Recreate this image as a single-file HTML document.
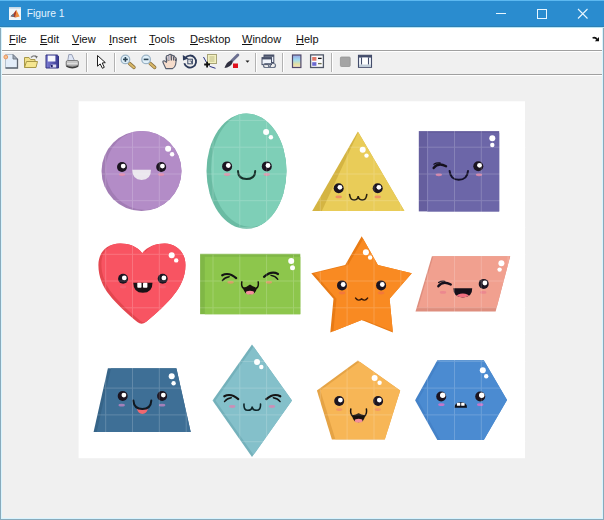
<!DOCTYPE html>
<html><head><meta charset="utf-8">
<style>
html,body{margin:0;padding:0;}
body{width:604px;height:520px;position:relative;overflow:hidden;background:#f0f0f0;font-family:"Liberation Sans",sans-serif;}
.a{position:absolute;}
#title{left:0;top:0;width:604px;height:28px;background:#2a8ccf;}
#menu{left:0;top:28px;width:604px;height:22px;background:#fff;}
.mi{position:absolute;top:32px;font-size:11px;color:#111;white-space:nowrap;line-height:14px;}
.mi u{text-decoration:underline;text-underline-offset:1px;text-decoration-thickness:1px;}
#l1{left:0;top:50px;width:604px;height:1px;background:#a0a0a0;}
#l1b{left:0;top:51px;width:604px;height:1px;background:#fff;}
#tb{left:0;top:52px;width:604px;height:22px;background:#f0f0f0;}
#l2{left:0;top:74px;width:604px;height:1px;background:#a0a0a0;}
#l2b{left:0;top:75px;width:604px;height:1px;background:#fff;}
#bl{left:0;top:28px;width:1px;height:492px;background:#88aabb;}#bl2{left:1px;top:28px;width:1px;height:491px;background:#d8f4ff;}
#br{left:603px;top:28px;width:1px;height:492px;background:#88aabb;}#br2{left:602px;top:28px;width:1px;height:491px;background:#d8f4ff;}
#bb{left:0;top:519px;width:604px;height:1px;background:#88aabb;}#bb2{left:1px;top:518px;width:602px;height:1px;background:#d8f4ff;}
.sep{position:absolute;top:53px;width:1px;height:19px;background:#b2b2b2;box-shadow:1px 0 0 #fff;}
</style></head>
<body>
<div class="a" id="title"></div><div class="a" style="left:0;top:0;width:604px;height:1px;background:#5cb8f0"></div><div class="a" style="left:0;top:26px;width:604px;height:1px;background:#2d80b4"></div><div class="a" style="left:0;top:27px;width:604px;height:1px;background:#b8e4f4"></div><div class="a" style="left:0;top:28px;width:604px;height:2px;background:#f4fcff"></div>
<div class="a" id="menu"></div>
<div class="a" id="l1"></div><div class="a" id="l1b"></div>
<div class="a" id="tb"></div>
<div class="a" id="l2"></div><div class="a" id="l2b"></div>
<div class="a" style="left:26.8px;top:7px;font-size:10.3px;color:#e4f4ff;line-height:14px;">Figure 1</div>
<div class="mi" style="left:9px"><u>F</u>ile</div>
<div class="mi" style="left:40px"><u>E</u>dit</div>
<div class="mi" style="left:72px"><u>V</u>iew</div>
<div class="mi" style="left:109px"><u>I</u>nsert</div>
<div class="mi" style="left:149px"><u>T</u>ools</div>
<div class="mi" style="left:190px"><u>D</u>esktop</div>
<div class="mi" style="left:242px"><u>W</u>indow</div>
<div class="mi" style="left:296px"><u>H</u>elp</div>
<div class="sep" style="left:86px"></div>
<div class="sep" style="left:114px"></div>
<div class="sep" style="left:255px"></div>
<div class="sep" style="left:282px"></div>
<div class="sep" style="left:331px"></div>
<svg class="a" style="left:0;top:0" width="604" height="80" viewBox="0 0 604 80"><rect x="9" y="7" width="12" height="13" fill="#eef6fb"/><rect x="9" y="7" width="12" height="1.6" fill="#c4d8e6"/><path d="M10.5,16.2 L13.6,13.6 L16.3,9.8 L15.6,17.5 Z" fill="#a83c26"/><path d="M16.3,9.8 L19.6,16.6 L15.6,17.5 Z" fill="#f08c3c"/><path d="M10.5,16.2 L13.6,13.6 L14.2,16.8 Z" fill="#5a7890"/><path d="M5.5,54.5 H13 L17.5,59 V68 H5.5 Z" fill="#e3edf9" stroke="#b4c0cc" stroke-width="1"/><path d="M17.5,59 V68 H5.5" fill="none" stroke="#5e6672" stroke-width="1.3"/><path d="M13,54.5 V59 H17.5 Z" fill="#a4aebb" stroke="#6a727e" stroke-width="0.9"/><circle cx="5.8" cy="57" r="1.9" fill="#f6c090" stroke="#e89058" stroke-width="0.9"/><path d="M24.5,67.5 V57.5 H29 L30.5,59.5 H35 V61.5" fill="#f0e08a" stroke="#a89848" stroke-width="1"/><path d="M24.5,67.5 L26.5,61.5 H37.5 L36,67.5 Z" fill="#f5e690" stroke="#a89848" stroke-width="1"/><path d="M31,57.5 Q33.5,54.5 36.5,57" fill="none" stroke="#808080" stroke-width="1.2"/><path d="M35,55.5 L37.8,56.2 L36.4,58.8 Z" fill="#707070"/><defs><linearGradient id="fpg" x1="0" y1="0" x2="1" y2="0"><stop offset="0" stop-color="#7c7cd4"/><stop offset="1" stop-color="#3a3a92"/></linearGradient><linearGradient id="prg" x1="0" y1="0" x2="0" y2="1"><stop offset="0" stop-color="#d8d8d8"/><stop offset="1" stop-color="#9a9a9a"/></linearGradient></defs><path d="M46,55 H57.3 L58.5,56.2 V68 H46 Z" fill="url(#fpg)" stroke="#323280" stroke-width="1"/><rect x="47.8" y="55.6" width="7.6" height="5.9" fill="#f6f7fc"/><path d="M50,67.6 L51.2,64.4 H56.2 V67.6 Z" fill="#dcdcf2"/><rect x="50.9" y="64.8" width="1.8" height="2.4" fill="#1e1e66"/><path d="M67.8,60.5 L68.8,54.6 H71.8 L74.4,60.5 Z" fill="#dee6f6" stroke="#8e96ae" stroke-width="0.9"/><path d="M66.2,62 Q66.2,60.6 67.6,60.6 H77 Q78.4,60.6 78.4,62 V65.6 Q72.3,68.6 66.2,65.6 Z" fill="url(#prg)" stroke="#6c6c6c" stroke-width="0.9"/><path d="M67,63.8 H77.6" stroke="#f4f4f4" stroke-width="0.9"/><path d="M66.4,66.2 Q72.3,69.4 78.2,66.2" stroke="#3c3c3c" stroke-width="1.4" fill="none"/><path d="M97.5,55.5 L97.5,66.2 L100.2,63.9 L102.4,68.3 L104.3,67.3 L102.2,63 L105.3,62.6 Z" fill="#fff" stroke="#1e1e1e" stroke-width="1" stroke-linejoin="miter"/><path d="M129.4,63.4 L134.0,67.4" stroke="#8a7040" stroke-width="3.4" stroke-linecap="round"/><path d="M129.4,63.4 L134.0,67.4" stroke="#d8b868" stroke-width="2" stroke-linecap="round"/><circle cx="125.4" cy="59.4" r="4.3" fill="#e0f0fa" stroke="#9cb4c6" stroke-width="1.3"/><path d="M123.0,59.4 H127.80000000000001" stroke="#2e4656" stroke-width="1.6"/><path d="M125.4,57.0 V61.8" stroke="#2e4656" stroke-width="1.6"/><path d="M150.1,63.4 L154.7,67.4" stroke="#8a7040" stroke-width="3.4" stroke-linecap="round"/><path d="M150.1,63.4 L154.7,67.4" stroke="#d8b868" stroke-width="2" stroke-linecap="round"/><circle cx="146.1" cy="59.4" r="4.3" fill="#e0f0fa" stroke="#9cb4c6" stroke-width="1.3"/><path d="M143.7,59.4 H148.5" stroke="#2e4656" stroke-width="1.6"/><path d="M165.8,68.6 L163,62.6 Q162.4,60.6 164.4,60.9 L166.4,62.4 L166.2,57.2 Q166.3,55.2 168.2,55.6 Q169.2,53.9 171,54.5 Q172.2,54.6 172.6,55.6 Q174.4,55.3 174.9,57 Q176.6,57.5 176.3,59.8 L175.6,64.6 Q174.8,67.6 172.6,68.6 Z" fill="#f5dccb" stroke="#545c6c" stroke-width="1.1" stroke-linejoin="round"/><path d="M166.4,57.5 Q167,60 166.6,61.5 M168.6,56 L168.9,60.6 M171.2,55 L171.4,60.4 M173.7,56.2 L173.7,60.6 M176,58.5 L175.6,61" stroke="#4e5666" stroke-width="1.3" fill="none"/><path d="M167,56.2 L168,60 L170,60 L170,55.5 Z M172,56 L172.8,60 L173,56.5 Z" fill="#c8c6d4" opacity="0.8"/><path d="M185.2,58 A6,6 0 1 1 184.3,63.2" fill="none" stroke="#2c3a5a" stroke-width="1.8"/><path d="M182.8,55 L188.5,58.6 L183,60.6 Z" fill="#2c3a5a"/><rect x="187.8" y="59.2" width="4.6" height="4.6" fill="none" stroke="#3c4a66" stroke-width="1"/><path d="M189.5,61 L191.5,61 L191.5,63" stroke="#3c4a66" stroke-width="0.8" fill="none"/><rect x="207.5" y="54.5" width="9" height="9" fill="#f2f0c0" stroke="#a8a478" stroke-width="1"/><path d="M209.5,57 H214.5 M209.5,59 H214.5 M209.5,61 H214.5" stroke="#b0ac78" stroke-width="0.8"/><path d="M203.5,57 L206.5,62.5 M209.5,66.3 L215.5,68.3" stroke="#283080" stroke-width="1"/><path d="M204.2,64.5 H210 M207.1,61.8 V67.5" stroke="#101010" stroke-width="1.8"/><path d="M237.8,55 L231.5,61.3" stroke="#6c7090" stroke-width="3" stroke-linecap="round"/><path d="M232.5,60.5 Q229.5,60 227,63 Q225,66 224.5,68 Q227,67.8 230,66 Q233,63.5 232.5,60.5 Z" fill="#303040"/><rect x="233" y="63.5" width="5" height="4.5" fill="#e0101c"/><path d="M245.5,60.5 H249.5 L247.5,62.8 Z" fill="#202020"/><rect x="264" y="55" width="9.8" height="7.5" fill="#e8eef8" stroke="#485068" stroke-width="1"/><rect x="264" y="55" width="9.8" height="1.8" fill="#485068"/><rect x="262" y="57.6" width="9.5" height="7" fill="#f0f4fb" stroke="#485068" stroke-width="1"/><rect x="262" y="57.6" width="9.5" height="1.8" fill="#485068"/><rect x="263.5" y="63.5" width="7" height="4" rx="2" fill="none" stroke="#6a7488" stroke-width="1.2"/><rect x="268.5" y="63.5" width="7" height="4" rx="2" fill="none" stroke="#6a7488" stroke-width="1.2"/><defs><linearGradient id="cbg" x1="0" y1="0" x2="0" y2="1"><stop offset="0" stop-color="#98a4e4"/><stop offset="0.4" stop-color="#a0dcf0"/><stop offset="0.75" stop-color="#e6e0a0"/><stop offset="1" stop-color="#f2e2cc"/></linearGradient></defs><rect x="292.5" y="55" width="8.4" height="12.5" fill="url(#cbg)" stroke="#50486a" stroke-width="1.2"/><rect x="310.6" y="54.9" width="12.8" height="12.6" fill="#fbfbfd" stroke="#505868" stroke-width="1.3"/><rect x="312.2" y="57" width="4.2" height="3.7" fill="#e07868"/><rect x="312.2" y="62.2" width="4.2" height="3.6" fill="#6a68d0"/><path d="M318,58.4 H321.6" stroke="#101010" stroke-width="1.3"/><path d="M318,63.6 H321.6" stroke="#70704c" stroke-width="1.3"/><rect x="340.4" y="57" width="9.8" height="9.5" rx="1" fill="#a4a4a4" stroke="#949494" stroke-width="0.8"/><rect x="358.5" y="55.3" width="13" height="12" fill="#eef2f8" stroke="#434c6a" stroke-width="1.1"/><rect x="358.5" y="55.3" width="13" height="2.3" fill="#434c6a"/><rect x="361" y="57.6" width="1.2" height="7" fill="#434c6a"/><rect x="367.8" y="57.6" width="1.2" height="7" fill="#434c6a"/><rect x="362.2" y="57.6" width="5.6" height="7" fill="#fff"/><rect x="359" y="64.6" width="12" height="2.2" fill="#c0ccd8"/><path d="M592.6,37.9 Q595.5,36.8 597.2,39.6" fill="none" stroke="#101010" stroke-width="1.6"/><path d="M594.8,41.3 L599,41.3 L599,37 Z" fill="#101010"/><path d="M496,13.5 H506" stroke="#e8f6ff" stroke-width="1"/><rect x="537.5" y="9.5" width="9" height="9" fill="none" stroke="#e8f6ff" stroke-width="1"/><path d="M578,9 L587.5,18.5 M587.5,9 L578,18.5" stroke="#e8f6ff" stroke-width="1.1"/></svg>
<svg class="a" style="left:0;top:0" width="604" height="520" viewBox="0 0 604 520"><rect x="78.6" y="101.3" width="446.4" height="356.9" fill="#fff"/><clipPath id="c1"><circle cx="141.5" cy="171" r="40" fill="#000"/></clipPath><circle cx="141.5" cy="171" r="40" fill="#a27db5"/><g clip-path="url(#c1)"><circle cx="145.5" cy="170" r="40" fill="#b38cc7"/></g><circle cx="122" cy="167" r="5" fill="#1b1420"/><circle cx="123.2" cy="166.1" r="2.4" fill="#fff"/><circle cx="161.2" cy="167" r="5" fill="#1b1420"/><circle cx="162.4" cy="166.1" r="2.4" fill="#fff"/><ellipse cx="122" cy="174.6" rx="3.2" ry="1.4" fill="#e88aa8" opacity="0.8"/><ellipse cx="161.2" cy="174.6" rx="3.2" ry="1.4" fill="#e88aa8" opacity="0.8"/><path d="M132.3,169.8 H151 Q151,180 141.6,180 Q132.3,180 132.3,169.8 Z" fill="#ebe7ee"/><circle cx="168.1" cy="148.8" r="3" fill="#fff"/><circle cx="172.1" cy="154.2" r="2.2" fill="#fff"/><clipPath id="c2"><ellipse cx="246.5" cy="171.1" rx="40" ry="57.7" fill="#000"/></clipPath><ellipse cx="246.5" cy="171.1" rx="40" ry="57.7" fill="#6abba3"/><g clip-path="url(#c2)"><ellipse cx="251" cy="169.2" rx="40" ry="57.7" fill="#7ecfb7"/></g><circle cx="227.1" cy="166.4" r="5" fill="#1b1420"/><circle cx="228.3" cy="165.5" r="2.4" fill="#fff"/><circle cx="266.8" cy="166.4" r="5" fill="#1b1420"/><circle cx="268.0" cy="165.5" r="2.4" fill="#fff"/><ellipse cx="227.1" cy="174.5" rx="3.2" ry="1.4" fill="#e88aa8" opacity="0.8"/><ellipse cx="266.8" cy="174.5" rx="3.2" ry="1.4" fill="#e88aa8" opacity="0.8"/><path d="M238,171 Q238,179 246.6,179 Q255.2,179 255.2,171" fill="none" stroke="#17302a" stroke-width="2" stroke-linecap="round"/><circle cx="266.1" cy="132.1" r="3" fill="#fff"/><circle cx="270.9" cy="137.2" r="2.2" fill="#fff"/><clipPath id="c3"><path d="M357.9,131.6 L404.4,211 L312.2,211 Z" fill="#000"/></clipPath><path d="M357.9,131.6 L404.4,211 L312.2,211 Z" fill="#d4b442"/><g clip-path="url(#c3)"><path d="M358.6,131.6 L410,215 L320,215 Z" fill="#e9cc58"/></g><circle cx="338.7" cy="188.2" r="5" fill="#1b1420"/><circle cx="339.9" cy="187.3" r="2.4" fill="#fff"/><circle cx="377.7" cy="188.2" r="5" fill="#1b1420"/><circle cx="378.9" cy="187.3" r="2.4" fill="#fff"/><ellipse cx="338.7" cy="196.9" rx="3.2" ry="1.4" fill="#f07868" opacity="0.7"/><ellipse cx="377.7" cy="196.9" rx="3.2" ry="1.4" fill="#f07868" opacity="0.7"/><path d="M349.6,194.5 Q350.5,200.5 354.5,200 Q358,199.5 358.2,196 Q358.4,199.5 362,200 Q366,200.5 366.8,194.5" fill="none" stroke="#2a2010" stroke-width="1.6" stroke-linecap="round"/><circle cx="362.7" cy="149.8" r="3" fill="#fff"/><circle cx="366.5" cy="155.6" r="2.2" fill="#fff"/><clipPath id="c4"><rect x="418.8" y="131.1" width="80.4" height="80.3" fill="#000"/></clipPath><rect x="418.8" y="131.1" width="80.4" height="80.3" fill="#655e9e"/><g clip-path="url(#c4)"><rect x="427" y="133" width="80.4" height="80.3" fill="#6c66a8"/></g><path d="M433.6,168 Q438.1,162 446.1,166.2" fill="none" stroke="#14101c" stroke-width="2.3" stroke-linecap="round"/><path d="M433.90000000000003,164.2 Q436.6,162.4 440.1,163" fill="none" stroke="#14101c" stroke-width="1.3" stroke-linecap="round"/><circle cx="478.3" cy="166.2" r="5" fill="#1b1420"/><circle cx="479.5" cy="165.3" r="2.4" fill="#fff"/><ellipse cx="438.8" cy="174.8" rx="3.2" ry="1.4" fill="#e88aa8" opacity="0.8"/><ellipse cx="479" cy="174.8" rx="3.2" ry="1.4" fill="#e88aa8" opacity="0.8"/><path d="M449.6,171 Q450.5,179.8 458.8,179.8 Q467.2,179.8 468,171" fill="none" stroke="#15122a" stroke-width="2" stroke-linecap="round"/><circle cx="492.3" cy="138.3" r="3" fill="#fff"/><circle cx="492.3" cy="145" r="2.2" fill="#fff"/><clipPath id="c5"><path d="M 142.3,253.3 C 147.5,246.5 156.0,243.5 165.0,243.6 C 176.0,243.8 185.5,252.0 185.5,265.0 C 185.5,277.0 180.2,287.0 173.7,295.0 C 167.7,303.0 155.2,314.5 145.9,322.0 Q 141.6,325.3 137.3,322.0 C 128.0,314.5 115.5,303.0 109.5,295.0 C 103.0,287.0 98.4,277.0 98.4,265.0 C 98.4,253.0 106.0,243.8 120.0,243.6 C 129.0,243.5 137.0,246.5 142.3,253.3 Z" fill="#000"/></clipPath><path d="M 142.3,253.3 C 147.5,246.5 156.0,243.5 165.0,243.6 C 176.0,243.8 185.5,252.0 185.5,265.0 C 185.5,277.0 180.2,287.0 173.7,295.0 C 167.7,303.0 155.2,314.5 145.9,322.0 Q 141.6,325.3 137.3,322.0 C 128.0,314.5 115.5,303.0 109.5,295.0 C 103.0,287.0 98.4,277.0 98.4,265.0 C 98.4,253.0 106.0,243.8 120.0,243.6 C 129.0,243.5 137.0,246.5 142.3,253.3 Z" fill="#e4464f"/><g clip-path="url(#c5)"><path d="M 145.3,252.1 C 150.5,245.3 159.0,242.3 168.0,242.4 C 179.0,242.6 188.5,250.8 188.5,263.8 C 188.5,275.8 183.2,285.8 176.7,293.8 C 170.7,301.8 158.2,313.3 148.9,320.8 Q 144.6,324.1 140.3,320.8 C 131.0,313.3 118.5,301.8 112.5,293.8 C 106.0,285.8 101.4,275.8 101.4,263.8 C 101.4,251.8 109.0,242.6 123.0,242.4 C 132.0,242.3 140.0,245.3 145.3,252.1 Z" fill="#f85462"/></g><circle cx="123.1" cy="278.8" r="5" fill="#1b1420"/><circle cx="124.3" cy="277.9" r="2.4" fill="#fff"/><circle cx="162.7" cy="278.8" r="5" fill="#1b1420"/><circle cx="163.9" cy="277.9" r="2.4" fill="#fff"/><ellipse cx="123.1" cy="287" rx="3.2" ry="1.4" fill="#f07890" opacity="0.35"/><ellipse cx="162.7" cy="287" rx="3.2" ry="1.4" fill="#f07890" opacity="0.35"/><path d="M133.3,282.7 H152.5 Q152.5,292.7 142.9,292.7 Q133.3,292.7 133.3,282.7 Z" fill="#1a1216"/><rect x="137.3" y="282.7" width="4.2" height="5" rx="0.8" fill="#fff"/><rect x="143" y="282.7" width="4.4" height="5" rx="0.8" fill="#fff"/><circle cx="171.7" cy="255.2" r="3" fill="#fff"/><circle cx="176.2" cy="260.4" r="2.2" fill="#fff"/><clipPath id="c6"><rect x="200.1" y="253.8" width="100.2" height="60.4" fill="#000"/></clipPath><rect x="200.1" y="253.8" width="100.2" height="60.4" fill="#80b746"/><g clip-path="url(#c6)"><rect x="204.8" y="256.8" width="100.2" height="60.4" fill="#8dc64c"/></g><path d="M222.2,275.3 Q228.7,271.7 236.2,278.1" fill="none" stroke="#141414" stroke-width="2.2" stroke-linecap="round"/><path d="M222.39999999999998,280.6 Q224.79999999999998,277.3 229.2,276.7" fill="none" stroke="#141414" stroke-width="1.4" stroke-linecap="round"/><path d="M278,274 Q271.5,270.4 264,276.8" fill="none" stroke="#141414" stroke-width="2.2" stroke-linecap="round"/><path d="M277.8,279.3 Q275.4,276 271,275.4" fill="none" stroke="#141414" stroke-width="1.4" stroke-linecap="round"/><ellipse cx="230.6" cy="282.3" rx="3.2" ry="1.4" fill="#f09070" opacity="0.75"/><ellipse cx="268.9" cy="282.3" rx="3.2" ry="1.4" fill="#f09070" opacity="0.75"/><path d="M243.0,287.6 Q247.13,287.20000000000005 250,284.6 Q252.87,287.20000000000005 257.0,287.6 Q256.2,294.3 250,294.3 Q243.8,294.3 243.0,287.6 Z" fill="#17120e"/><path d="M241.8,281.8 Q241.0,286.1 243.60000000000002,288.40000000000003" fill="none" stroke="#17120e" stroke-width="1.5" stroke-linecap="round"/><path d="M258.2,281.8 Q259.0,286.1 256.4,288.40000000000003" fill="none" stroke="#17120e" stroke-width="1.5" stroke-linecap="round"/><ellipse cx="250" cy="292.7" rx="4.1" ry="1.9" fill="#f3909a"/><circle cx="291.2" cy="261" r="3" fill="#fff"/><circle cx="292.5" cy="267.8" r="2.5" fill="#fff"/><clipPath id="c7"><path d="M361.7,236.3 L377.9,264.9 L411.8,273.3 L389.6,298.7 L392.9,332.5 L361.7,319.9 L330.3,332.5 L333.5,298.7 L311.3,273.3 L345.2,264.9 Z" fill="#000"/></clipPath><path d="M361.7,236.3 L377.9,264.9 L411.8,273.3 L389.6,298.7 L392.9,332.5 L361.7,319.9 L330.3,332.5 L333.5,298.7 L311.3,273.3 L345.2,264.9 Z" fill="#e87a14"/><g clip-path="url(#c7)"><path d="M364.7,236.3 L380.9,264.9 L414.8,273.3 L392.6,298.7 L395.9,332.5 L364.7,319.9 L333.3,332.5 L336.5,298.7 L314.3,273.3 L348.2,264.9 Z" fill="#f98a22"/></g><circle cx="342" cy="285.4" r="5" fill="#1b1420"/><circle cx="343.2" cy="284.5" r="2.4" fill="#fff"/><circle cx="381.1" cy="285.4" r="5" fill="#1b1420"/><circle cx="382.3" cy="284.5" r="2.4" fill="#fff"/><ellipse cx="342" cy="293" rx="3.2" ry="1.4" fill="#f06a50" opacity="0.55"/><ellipse cx="381.1" cy="293" rx="3.2" ry="1.4" fill="#f06a50" opacity="0.55"/><path d="M355.5,298 Q358.5,301.8 361.6,298.8 Q364.7,301.8 367.7,298" fill="none" stroke="#3a1a08" stroke-width="1.3" stroke-linecap="round"/><circle cx="365.9" cy="252.2" r="3" fill="#fff"/><circle cx="370.1" cy="257.5" r="2.2" fill="#fff"/><clipPath id="c8"><path d="M431.9,256.3 L510.2,256.3 L495.6,311.5 L415.5,311.5 Z" fill="#000"/></clipPath><path d="M431.9,256.3 L510.2,256.3 L495.6,311.5 L415.5,311.5 Z" fill="#de8e7e"/><g clip-path="url(#c8)"><path d="M434.6,252 L513,252 L498.4,307.6 L418.3,307.6 Z" fill="#f1a08f"/></g><path d="M438.3,286.3 Q442.8,280.3 450.8,284.5" fill="none" stroke="#14101c" stroke-width="2.3" stroke-linecap="round"/><path d="M438.6,282.5 Q441.3,280.7 444.8,281.3" fill="none" stroke="#14101c" stroke-width="1.3" stroke-linecap="round"/><circle cx="483.7" cy="283.9" r="5" fill="#1b1420"/><circle cx="484.9" cy="283.0" r="2.4" fill="#fff"/><ellipse cx="443" cy="292.4" rx="3.2" ry="1.4" fill="#e87090" opacity="0.5"/><ellipse cx="483.2" cy="292.4" rx="3.2" ry="1.4" fill="#e87090" opacity="0.5"/><clipPath id="m8"><path d="M453.4,288.3 H472.2 Q472.5,297.4 462.8,297.4 Q453.1,297.4 453.4,288.3 Z"/></clipPath><path d="M453.4,288.3 H472.2 Q472.5,297.4 462.8,297.4 Q453.1,297.4 453.4,288.3 Z" fill="#15101a"/><ellipse clip-path="url(#m8)" cx="462.8" cy="297" rx="6.5" ry="3.4" fill="#f07080"/><circle cx="501.4" cy="263.2" r="3" fill="#fff"/><circle cx="499.6" cy="269.6" r="2.2" fill="#fff"/><clipPath id="c9"><path d="M107.9,368.3 L176.4,368.3 L190.7,432.1 L93.6,432.1 Z" fill="#000"/></clipPath><path d="M107.9,368.3 L176.4,368.3 L190.7,432.1 L93.6,432.1 Z" fill="#366488"/><g clip-path="url(#c9)"><path d="M111,368.3 L179.5,368.3 L193.8,432.1 L96.7,432.1 Z" fill="#3e6f96"/></g><circle cx="122.7" cy="396" r="5" fill="#1b1420"/><circle cx="123.9" cy="395.1" r="2.4" fill="#fff"/><circle cx="162.1" cy="396" r="5" fill="#1b1420"/><circle cx="163.3" cy="395.1" r="2.4" fill="#fff"/><ellipse cx="121.7" cy="405.2" rx="3.2" ry="1.4" fill="#d088c8" opacity="0.7"/><ellipse cx="162.1" cy="405.2" rx="3.2" ry="1.4" fill="#d088c8" opacity="0.7"/><path d="M136.8,408.3 Q142.4,410.3 148,408.3 Q146.8,414 142.4,414 Q138,414 136.8,408.3 Z" fill="#f06870"/><path d="M133.4,400.6 Q134,409 142.4,409 Q150.8,409 151.3,400.6" fill="none" stroke="#101820" stroke-width="2" stroke-linecap="round"/><circle cx="171.7" cy="376.3" r="3" fill="#fff"/><circle cx="173.6" cy="383.2" r="2.2" fill="#fff"/><clipPath id="c10"><path d="M252,344.5 L292,400.5 L252,457 L212.5,400.5 Z" fill="#000"/></clipPath><path d="M252,344.5 L292,400.5 L252,457 L212.5,400.5 Z" fill="#74b1bb"/><g clip-path="url(#c10)"><path d="M255,344.5 L295,400.5 L255,457 L215.5,400.5 Z" fill="#84c0ca"/></g><path d="M224.3,396.3 Q230.8,392.7 238.3,399.1" fill="none" stroke="#141414" stroke-width="2.2" stroke-linecap="round"/><path d="M224.5,401.6 Q226.9,398.3 231.3,397.7" fill="none" stroke="#141414" stroke-width="1.4" stroke-linecap="round"/><path d="M280.3,396.3 Q273.8,392.7 266.3,399.1" fill="none" stroke="#141414" stroke-width="2.2" stroke-linecap="round"/><path d="M280.1,401.6 Q277.7,398.3 273.3,397.7" fill="none" stroke="#141414" stroke-width="1.4" stroke-linecap="round"/><ellipse cx="232.2" cy="406.5" rx="3.2" ry="1.4" fill="#e080b0" opacity="0.75"/><ellipse cx="271.9" cy="406.5" rx="3.2" ry="1.4" fill="#e080b0" opacity="0.75"/><path d="M244,404 Q243.5,410.3 247.8,410.3 Q252,410.3 252.2,406.6 Q252.4,410.3 256.6,410.3 Q260.9,410.3 260.5,404" fill="none" stroke="#0e2428" stroke-width="1.6" stroke-linecap="round"/><circle cx="257" cy="362" r="3" fill="#fff"/><circle cx="261.3" cy="367" r="2.2" fill="#fff"/><clipPath id="c11"><path d="M357.9,360.6 L400.2,390.4 L384.8,439.4 L331.9,439.4 L316.9,390.4 Z" fill="#000"/></clipPath><path d="M357.9,360.6 L400.2,390.4 L384.8,439.4 L331.9,439.4 L316.9,390.4 Z" fill="#e5a345"/><g clip-path="url(#c11)"><path d="M361.4,360.6 L403.7,390.4 L388.3,439.4 L335.4,439.4 L320.4,390.4 Z" fill="#f7b656"/></g><circle cx="339.2" cy="401" r="5" fill="#1b1420"/><circle cx="340.4" cy="400.1" r="2.4" fill="#fff"/><circle cx="378.1" cy="401" r="5" fill="#1b1420"/><circle cx="379.3" cy="400.1" r="2.4" fill="#fff"/><ellipse cx="339.2" cy="409.6" rx="3.2" ry="1.4" fill="#f07878" opacity="0.5"/><ellipse cx="377.7" cy="409.6" rx="3.2" ry="1.4" fill="#f07878" opacity="0.5"/><path d="M352.0,415.3 Q355.87,414.90000000000003 358.6,413.3 Q361.33000000000004,414.90000000000003 365.20000000000005,415.3 Q364.40000000000003,422.3 358.6,422.3 Q352.8,422.3 352.0,415.3 Z" fill="#17120e"/><path d="M350.8,408.9 Q350.0,413.8 352.6,416.1" fill="none" stroke="#17120e" stroke-width="1.5" stroke-linecap="round"/><path d="M366.40000000000003,408.9 Q367.20000000000005,413.8 364.6,416.1" fill="none" stroke="#17120e" stroke-width="1.5" stroke-linecap="round"/><ellipse cx="358.6" cy="420.7" rx="3.9" ry="1.9" fill="#f3909a"/><circle cx="374.6" cy="377.9" r="3" fill="#fff"/><circle cx="379.6" cy="382.7" r="2.2" fill="#fff"/><clipPath id="c12"><path d="M437.3,360.2 L483.8,360.2 L507,400 L483.8,440 L437.3,440 L415.1,400.2 Z" fill="#000"/></clipPath><path d="M437.3,360.2 L483.8,360.2 L507,400 L483.8,440 L437.3,440 L415.1,400.2 Z" fill="#4482c8"/><g clip-path="url(#c12)"><path d="M440.3,360.2 L486.8,360.2 L510,400 L486.8,440 L440.3,440 L418.1,400.2 Z" fill="#4b8bd1"/></g><circle cx="441.2" cy="396.5" r="5" fill="#1b1420"/><circle cx="442.7" cy="395.3" r="2.7" fill="#fff"/><circle cx="480.2" cy="396.5" r="5" fill="#1b1420"/><circle cx="481.7" cy="395.3" r="2.7" fill="#fff"/><ellipse cx="441.4" cy="404.7" rx="3.2" ry="1.4" fill="#e070c8" opacity="0.8"/><ellipse cx="480.2" cy="404.7" rx="3.2" ry="1.4" fill="#e070c8" opacity="0.8"/><path d="M454.6,407.8 Q454.6,402.3 460.8,402.3 Q467,402.3 467,407.8 Z" fill="#10121a"/><rect x="456.9" y="402.8" width="3.4" height="3" rx="0.6" fill="#fff"/><rect x="461.2" y="402.8" width="3.4" height="3" rx="0.6" fill="#fff"/><circle cx="482.8" cy="370.3" r="3" fill="#fff"/><circle cx="486.2" cy="376.3" r="2.2" fill="#fff"/><g stroke="#fff" stroke-width="1" opacity="0.18"><line x1="105.7" y1="101" x2="105.7" y2="458"/><line x1="132.5" y1="101" x2="132.5" y2="458"/><line x1="159.3" y1="101" x2="159.3" y2="458"/><line x1="186.2" y1="101" x2="186.2" y2="458"/><line x1="213.0" y1="101" x2="213.0" y2="458"/><line x1="239.8" y1="101" x2="239.8" y2="458"/><line x1="266.6" y1="101" x2="266.6" y2="458"/><line x1="293.5" y1="101" x2="293.5" y2="458"/><line x1="320.3" y1="101" x2="320.3" y2="458"/><line x1="347.1" y1="101" x2="347.1" y2="458"/><line x1="374.0" y1="101" x2="374.0" y2="458"/><line x1="400.8" y1="101" x2="400.8" y2="458"/><line x1="427.6" y1="101" x2="427.6" y2="458"/><line x1="454.5" y1="101" x2="454.5" y2="458"/><line x1="481.3" y1="101" x2="481.3" y2="458"/><line x1="508.1" y1="101" x2="508.1" y2="458"/><line x1="79" y1="120.4" x2="526" y2="120.4"/><line x1="79" y1="147.2" x2="526" y2="147.2"/><line x1="79" y1="174.0" x2="526" y2="174.0"/><line x1="79" y1="200.7" x2="526" y2="200.7"/><line x1="79" y1="227.5" x2="526" y2="227.5"/><line x1="79" y1="254.3" x2="526" y2="254.3"/><line x1="79" y1="281.0" x2="526" y2="281.0"/><line x1="79" y1="307.8" x2="526" y2="307.8"/><line x1="79" y1="334.6" x2="526" y2="334.6"/><line x1="79" y1="361.4" x2="526" y2="361.4"/><line x1="79" y1="388.1" x2="526" y2="388.1"/><line x1="79" y1="414.9" x2="526" y2="414.9"/><line x1="79" y1="441.7" x2="526" y2="441.7"/></g></svg>
<div class="a" id="bl2"></div><div class="a" id="br2"></div><div class="a" id="bb2"></div><div class="a" id="bl"></div><div class="a" id="br"></div><div class="a" id="bb"></div>
</body></html>
